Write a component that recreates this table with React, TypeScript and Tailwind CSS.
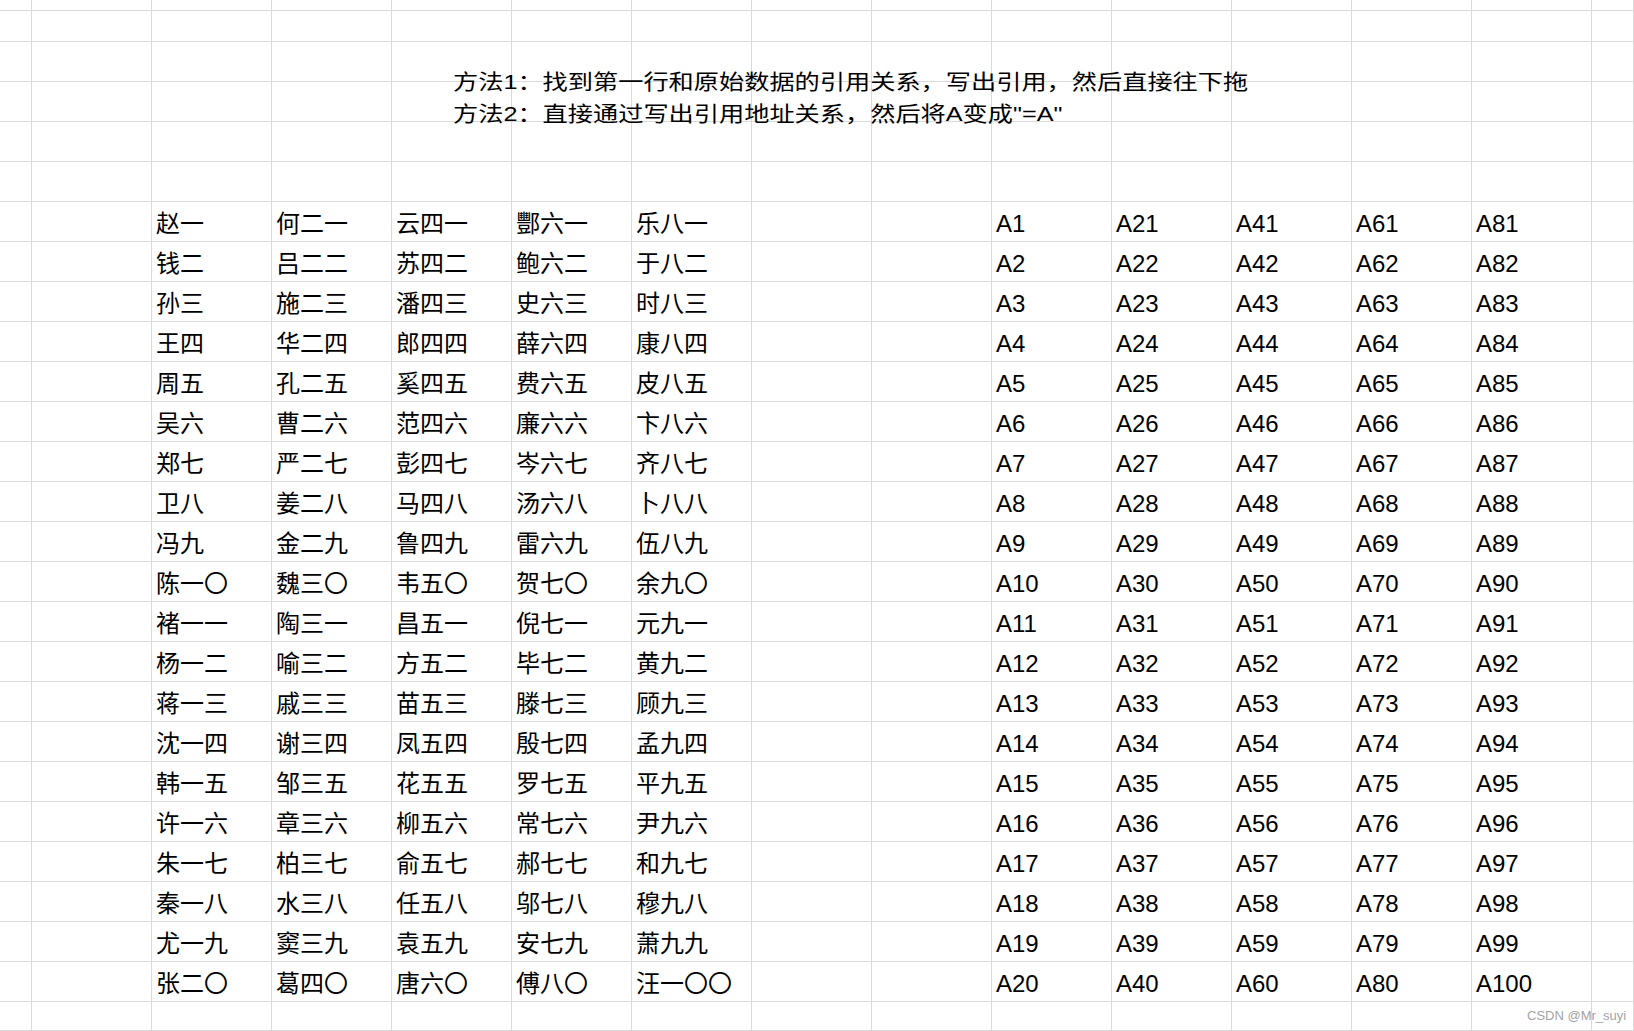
import React from "react";

const names: string[][] = [
  "赵一 钱二 孙三 王四 周五 吴六 郑七 卫八 冯九 陈一〇 褚一一 杨一二 蒋一三 沈一四 韩一五 许一六 朱一七 秦一八 尤一九 张二〇".split(" "),
  "何二一 吕二二 施二三 华二四 孔二五 曹二六 严二七 姜二八 金二九 魏三〇 陶三一 喻三二 戚三三 谢三四 邹三五 章三六 柏三七 水三八 窦三九 葛四〇".split(" "),
  "云四一 苏四二 潘四三 郎四四 奚四五 范四六 彭四七 马四八 鲁四九 韦五〇 昌五一 方五二 苗五三 凤五四 花五五 柳五六 俞五七 任五八 袁五九 唐六〇".split(" "),
  "酆六一 鲍六二 史六三 薛六四 费六五 廉六六 岑六七 汤六八 雷六九 贺七〇 倪七一 毕七二 滕七三 殷七四 罗七五 常七六 郝七七 邬七八 安七九 傅八〇".split(" "),
  "乐八一 于八二 时八三 康八四 皮八五 卞八六 齐八七 卜八八 伍八九 余九〇 元九一 黄九二 顾九三 孟九四 平九五 尹九六 和九七 穆九八 萧九九 汪一〇〇".split(" "),
];

const NCOLS = 15;
const NROWS = 27;

function cellText(r: number, c: number): string {
  const d = r - 6;
  if (d < 0 || d >= 20) return "";
  if (c >= 2 && c <= 6) return names[c - 2][d];
  if (c >= 9 && c <= 13) return "A" + ((c - 9) * 20 + d + 1);
  return "";
}

export default function App() {
  const cells: React.ReactNode[] = [];
  for (let r = 0; r < NROWS; r++) {
    for (let c = 0; c < NCOLS; c++) {
      const t = cellText(r, c);
      cells.push(
        <div
          key={r + "-" + c}
          className="border-r border-b border-[#dadada] overflow-visible whitespace-nowrap pl-[4px] pt-[10px] text-[24px] leading-[24px] text-black"
        >
          {t}
        </div>
      );
    }
  }
  return (
    <div className="relative w-[1634px] h-[1031px] overflow-hidden bg-white font-['Liberation_Sans','Noto_Sans_CJK_SC',sans-serif]">
      <div className="grid grid-cols-[32px_repeat(13,120px)_42px] grid-rows-[2px_repeat(25,40px)_29px]">
        {cells}
      </div>
      <div className="absolute left-[453px] top-[66px] origin-left scale-x-[1.2] text-[21px] leading-[32px] text-black whitespace-nowrap">
        <div>方法1：找到第一行和原始数据的引用关系，写出引用，然后直接往下拖</div>
        <div>方法2：直接通过写出引用地址关系，然后将A变成"=A"</div>
      </div>
      <div className="absolute left-[1527px] top-[1009px] text-[13px] leading-[13px] text-[#a3a3a3] whitespace-nowrap">
        CSDN @Mr_suyi
      </div>
    </div>
  );
}
